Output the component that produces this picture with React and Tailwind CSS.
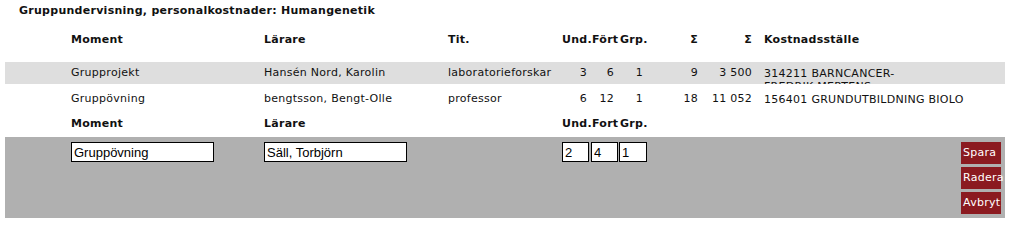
import React from "react";

// Column template shared by every row of the table and by the edit panel
const cols = "grid grid-cols-[66px_193px_184px_114px_29px_27px_29px_53px_64px_1fr]";

const rows = [
  {
    moment: "Grupprojekt",
    larare: "Hansén Nord, Karolin",
    tit: "laboratorieforskar",
    und: "3",
    fort: "6",
    grp: "1",
    sum: "9",
    kr: "3 500",
    kst: ["314211 BARNCANCER-", "FREDRIK MERTENS"],
    shaded: true,
  },
  {
    moment: "Gruppövning",
    larare: "bengtsson, Bengt-Olle",
    tit: "professor",
    und: "6",
    fort: "12",
    grp: "1",
    sum: "18",
    kr: "11 052",
    kst: ["156401 GRUNDUTBILDNING BIOLO"],
    shaded: false,
  },
];

function Field({ value, className }) {
  return (
    <input
      defaultValue={value}
      className={`h-[20px] border border-black bg-white pl-[2px] text-[13px] tracking-normal text-black outline-none font-['Liberation_Sans',Arial,sans-serif] ${className}`}
    />
  );
}

function RedButton({ children }) {
  return (
    <button className="h-[22px] w-[40px] bg-[#8b1a20] pl-[2px] text-left text-[11px] leading-[22px] text-white whitespace-nowrap">
      {children}
    </button>
  );
}

export default function App() {
  return (
    <div className="w-[1011px] h-[225px] bg-white text-[11px] tracking-[0.27px] text-[#111] font-['DejaVu_Sans',Verdana,sans-serif] pl-[5px] pr-[6px]">
      {/* Title */}
      <div className="h-[22px] leading-[22px] pl-[14px] font-bold">
        Gruppundervisning, personalkostnader: Humangenetik
      </div>

      {/* Table header */}
      <div className={`${cols} mt-[7px] h-[22px] leading-[22px] font-bold`}>
        <div />
        <div>Moment</div>
        <div>Lärare</div>
        <div>Tit.</div>
        <div>Und.</div>
        <div className="pl-[1px]">Fört</div>
        <div className="pl-[2px]">Grp.</div>
        <div className="text-right pr-[2px]">Σ</div>
        <div className="text-right pr-[12px]">Σ</div>
        <div>Kostnadsställe</div>
      </div>

      {/* Data rows */}
      <div className="mt-[11px] flex flex-col gap-[4px]">
        {rows.map((r) => (
          <div
            key={r.moment}
            className={`${cols} h-[22px] leading-[22px] overflow-hidden ${r.shaded ? "bg-[#dedede]" : ""}`}
          >
            <div />
            <div>{r.moment}</div>
            <div>{r.larare}</div>
            <div className="whitespace-nowrap overflow-hidden">{r.tit}</div>
            <div className="text-right pr-[4px]">{r.und}</div>
            <div className="text-right pr-[4px]">{r.fort}</div>
            <div className="text-right pr-[4px]">{r.grp}</div>
            <div className="text-right pr-[2px]">{r.sum}</div>
            <div className="text-right pr-[12px] whitespace-nowrap">{r.kr}</div>
            <div className="leading-[13px] pt-[4.5px] whitespace-nowrap">
              {r.kst.map((line) => (
                <div key={line}>{line}</div>
              ))}
            </div>
          </div>
        ))}
      </div>

      {/* Edit form header */}
      <div className={`${cols} mt-[3px] h-[22px] leading-[22px] font-bold`}>
        <div />
        <div>Moment</div>
        <div>Lärare</div>
        <div />
        <div>Und.</div>
        <div className="pl-[1px]">Fort</div>
        <div className="pl-[2px]">Grp.</div>
      </div>

      {/* Edit panel */}
      <div className={`${cols} mt-[2px] h-[81px] bg-[#b0b0b0] pt-[5px] pb-[4px]`}>
        <div />
        <div>
          <Field value="Gruppövning" className="w-[143px]" />
        </div>
        <div>
          <Field value="Säll, Torbjörn" className="w-[143px]" />
        </div>
        <div />
        <div>
          <Field value="2" className="w-[27px]" />
        </div>
        <div>
          <Field value="4" className="w-[27px]" />
        </div>
        <div>
          <Field value="1" className="ml-[1px] w-[28px]" />
        </div>
        <div />
        <div />
        <div className="flex flex-col items-end gap-[3px] pr-[4px]">
          <RedButton>Spara</RedButton>
          <RedButton>Radera</RedButton>
          <RedButton>Avbryt</RedButton>
        </div>
      </div>
    </div>
  );
}
